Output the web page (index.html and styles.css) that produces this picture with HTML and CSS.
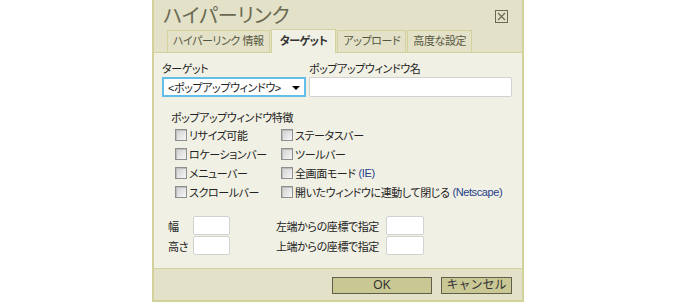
FILE: index.html
```html
<!DOCTYPE html>
<html>
<head>
  <title>ハイパーリンク</title>
  <link rel="stylesheet" href="styles.css">
</head>
<body>
  <div class="dialog">
    <div class="head">
      <div class="title-row">
        <span class="title">ハイパーリンク</span>
        <span class="close">
          <svg width="13" height="13" viewBox="0 0 13 13">
            <rect x="0.5" y="0.5" width="12" height="12" fill="none" stroke="#6a6a52"/>
            <path d="M3 3 L10 10 M10 3 L3 10" stroke="#6a6a52" stroke-width="1.2"/>
          </svg>
        </span>
      </div>
      <div class="tabs">
        <div class="tab">ハイパーリンク 情報</div>
        <div class="tab active">ターゲット</div>
        <div class="tab">アップロード</div>
        <div class="tab">高度な設定</div>
      </div>
    </div>

    <div class="panel">
      <div class="target-row">
        <div class="field target">
          <label>ターゲット</label>
          <div class="select">&lt;ポップアップウィンドウ&gt;<span class="arrow"></span></div>
        </div>
        <div class="field name">
          <label for="winName">ポップアップウィンドウ名</label>
          <input type="text" id="winName">
        </div>
      </div>

      <div class="features">
        <div class="features-title">ポップアップウィンドウ特徴</div>
        <div class="checks">
          <div class="check"><span class="box"></span>リサイズ可能</div>
          <div class="check"><span class="box"></span>ステータスバー</div>
          <div class="check"><span class="box"></span>ロケーションバー</div>
          <div class="check"><span class="box"></span>ツールバー</div>
          <div class="check"><span class="box"></span>メニューバー</div>
          <div class="check"><span class="box"></span>全画面モード<span class="note">(IE)</span></div>
          <div class="check"><span class="box"></span>スクロールバー</div>
          <div class="check"><span class="box"></span>開いたウィンドウに連動して閉じる <span class="note">(Netscape)</span></div>
        </div>
      </div>

      <div class="sizes">
        <span>幅</span>
        <input type="text" class="small">
        <span></span>
        <span>左端からの座標で指定</span>
        <input type="text" class="small">
        <span>高さ</span>
        <input type="text" class="small">
        <span></span>
        <span>上端からの座標で指定</span>
        <input type="text" class="small">
      </div>
    </div>

    <div class="foot">
      <button class="btn ok">OK</button>
      <button class="btn cancel">キャンセル</button>
    </div>
  </div>
</body>
</html>
```

FILE: styles.css
```css
body {
  margin: 0;
  background-color: #FFFFFF;
  font-family: "Liberation Sans", "Noto Sans CJK JP", sans-serif;
  font-size: 11px;
  letter-spacing: -0.4px;
  color: #222222;
  font-feature-settings: "palt";
}

.dialog {
  width: 368px;
  margin-left: 152px;
  border: 2px solid #D3D19C;
  border-top: 0;
  background-color: #E3E1C8;
  box-shadow: 0 2px 0 #8D8C80;
}

.head {
  height: 52px;
  display: flex;
  flex-direction: column;
}

.title-row {
  display: flex;
  justify-content: space-between;
  align-items: center;
  height: 24px;
  padding: 4px 14px 0 9px;
}

.title {
  font-size: 20px;
  line-height: 24px;
  letter-spacing: 0;
  color: #6A6A52;
}

.close svg {
  display: block;
}

.tabs {
  display: flex;
  align-items: flex-end;
  gap: 1px;
  margin-top: auto;
  padding-left: 13px;
}

.tab {
  height: 21px;
  line-height: 21px;
  padding: 0 5px;
  border: 1px solid #D3D19C;
  border-bottom: 0;
  color: #56563F;
  white-space: nowrap;
}

.tab.active {
  height: 23px;
  line-height: 23px;
  padding: 0 8px;
  margin-bottom: -1px;
  position: relative;
  background-color: #F1F0E4;
  font-weight: bold;
  color: #333333;
}

.panel {
  box-sizing: border-box;
  height: 217px;
  padding: 9px 10px 0 8px;
  background-color: #F1F0E4;
  border-top: 1px solid #D3D19C;
  border-bottom: 1px solid #D3D19C;
}

.target-row {
  display: flex;
  gap: 3px;
}

.field label {
  display: block;
  line-height: 14px;
  margin-bottom: 1px;
  white-space: nowrap;
}

.field.target {
  width: 144px;
}

.field.name {
  width: 203px;
}

.select {
  box-sizing: border-box;
  height: 20px;
  display: flex;
  align-items: center;
  justify-content: space-between;
  padding: 0 4px 0 4px;
  background-color: #FFFFFF;
  border: 2px solid #63BFEA;
  white-space: nowrap;
}

.arrow {
  width: 0;
  height: 0;
  border-left: 4px solid transparent;
  border-right: 4px solid transparent;
  border-top: 4px solid #000000;
  margin-top: 2px;
}

input[type="text"] {
  box-sizing: border-box;
  width: 100%;
  height: 20px;
  margin: 0;
  border: 1px solid #D2D2D2;
  border-radius: 2px;
  background-color: #FFFFFF;
}

.features {
  margin-top: 14px;
  padding-left: 9px;
}

.features-title {
  line-height: 14px;
}

.checks {
  display: grid;
  grid-template-columns: 106px auto;
  grid-auto-rows: 19px;
  margin-left: 4px;
}

.check {
  display: flex;
  align-items: center;
  gap: 2px;
  white-space: nowrap;
}

.box {
  box-sizing: border-box;
  width: 12px;
  height: 12px;
  border: 1px solid #8E8E8E;
  background: linear-gradient(135deg, #CFCFCF, #F6F6F6);
  box-shadow: inset 1px 1px 0 #BDBDBD;
}

.note {
  color: #24408C;
  margin-left: 1px;
}

.sizes {
  display: grid;
  grid-template-columns: 25px 37px 46px 110px 38px;
  grid-template-rows: 19px 19px;
  row-gap: 1px;
  align-items: center;
  margin-top: 15px;
  padding-left: 6px;
  white-space: nowrap;
}

.sizes input[type="text"].small {
  height: 19px;
}

.foot {
  display: flex;
  justify-content: flex-end;
  gap: 9px;
  height: 31px;
  padding: 8px 10px 0 0;
  box-sizing: border-box;
}

.btn {
  height: 17px;
  padding: 0;
  border: 1px solid #5F5F4C;
  background-color: #C9C894;
  font-family: "Liberation Sans", "Noto Sans CJK JP", sans-serif;
  font-size: 12px;
  line-height: 15px;
  color: #333333;
}

.btn.ok {
  width: 100px;
}

.btn.cancel {
  width: 71px;
}
```
